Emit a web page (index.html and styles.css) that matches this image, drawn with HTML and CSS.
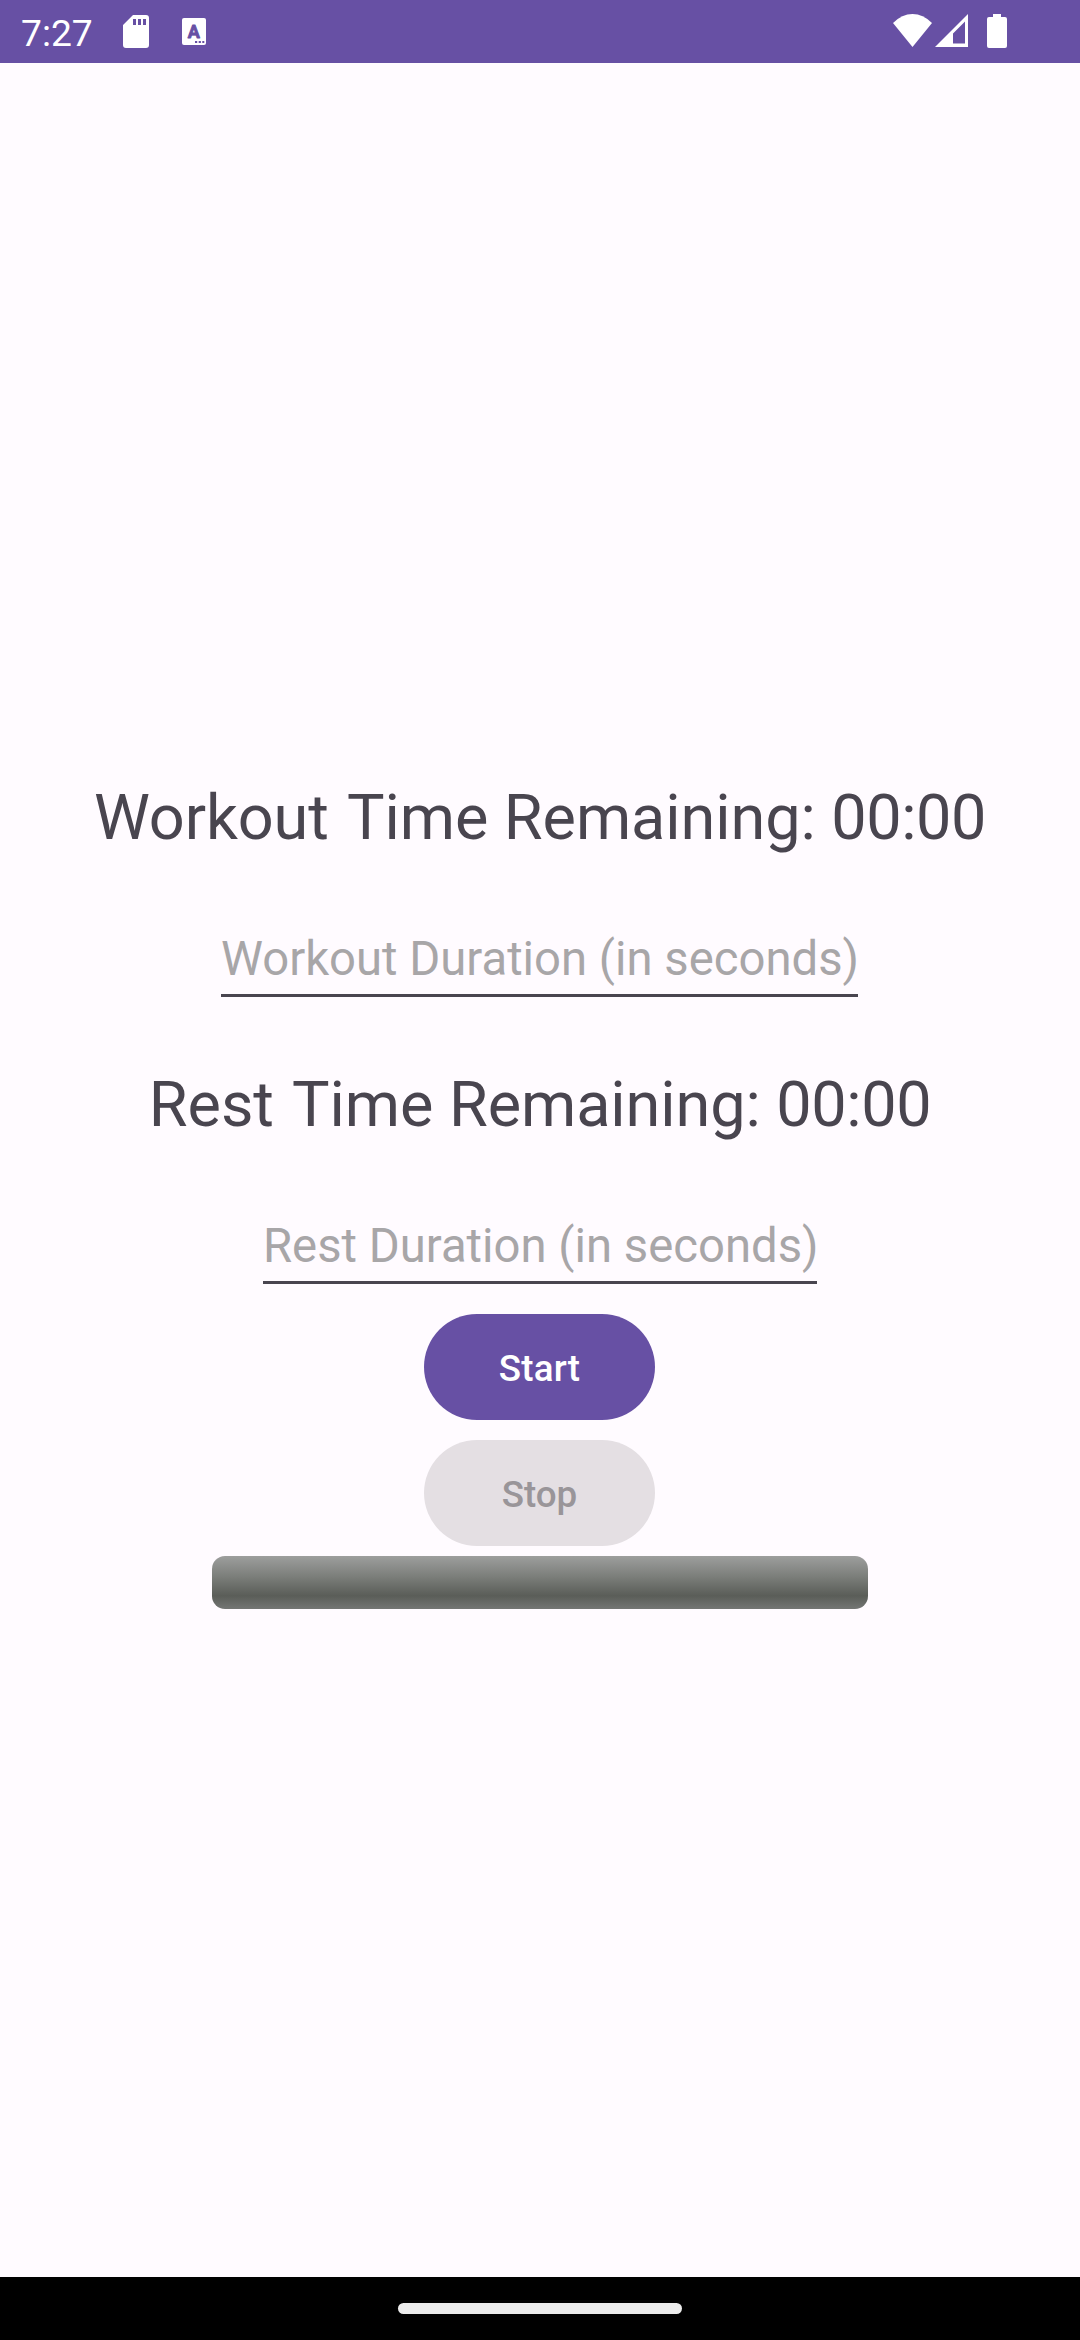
FILE: index.html
```html
<!DOCTYPE html>
<html lang="en">
<head>
<meta charset="utf-8">
<title>Workout Timer</title>
<link rel="stylesheet" href="styles.css">
</head>
<body>
<div class="screen">
  <header class="status-bar">
    <span class="clock">7:27</span>
    <svg class="icon-sd" width="26" height="33" viewBox="0 0 26 33"><path fill="#fff" fill-rule="evenodd" d="M10 0H23Q26 0 26 3V30Q26 33 23 33H3Q0 33 0 30V10ZM10 4V10H13V4ZM15 4V10H18V4ZM20 4V10H23V4Z"/></svg>
    <svg class="icon-app" width="24" height="27" viewBox="0 0 24 27"><rect width="24" height="27" rx="2" fill="#fff"/><text class="app-letter" x="11.8" y="19.500" text-anchor="middle">A</text><path d="M13 23h2.200v2H13zM16.700 23h2.200v2h-2.200zM20.300 23h2v2h-2z" fill="#6750a4"/></svg>
    <span class="spacer"></span>
    <svg class="icon-wifi" width="39" height="33" viewBox="0 0 39 33"><path fill="#fff" d="M0 9Q9 0 19.500 0T39 9L19.500 33Z"/></svg>
    <svg class="icon-signal" width="33" height="33" viewBox="0 0 33 33"><path fill="#fff" fill-rule="evenodd" d="M33 0V33H0ZM30 7.500L18 19.500V29.500H30Z"/></svg>
    <svg class="icon-battery" width="20" height="34" viewBox="0 0 20 34"><path fill="#fff" d="M6 0H14V3H18Q20 3 20 5V32Q20 34 18 34H2Q0 34 0 32V5Q0 3 2 3H6Z"/></svg>
  </header>
  <main class="content">
    <h1 class="title">Workout <span class="label">Time Remaining:</span> <span class="count">00:00</span></h1>
    <div class="field field-workout">Workout Duration (in seconds)</div>
    <h1 class="title title-rest">Rest <span class="label">Time Remaining:</span> <span class="count">00:00</span></h1>
    <div class="field field-rest">Rest Duration (in seconds)</div>
    <button class="button button-start">Start</button>
    <button class="button button-stop" disabled>Stop</button>
    <div class="progress"></div>
  </main>
  <footer class="nav-bar"><span class="nav-handle"></span></footer>
</div>
</body>
</html>
```
FILE: styles.css
```css
* { box-sizing: border-box; }

body {
  margin: 0;
  font-family: Roboto, sans-serif;
}

.screen {
  display: flex;
  flex-direction: column;
  width: 1080px;
  height: 2340px;
  overflow: hidden;
  background: #fffbff;
}

svg { display: block; flex: none; }

.status-bar {
  display: flex;
  height: 63px;
  padding: 0 73px 0 21px;
  background: #6750a4;
  color: #fff;
}

.clock {
  width: 102px;
  padding-top: 11px;
  font-size: 37.2px;
  line-height: 44px;
  white-space: nowrap;
}

.icon-sd { margin-top: 15px; }
.icon-app { margin: 18px 0 0 33px; }
.spacer { flex: 1; }
.icon-wifi { margin: 14px 3px 0 0; }
.icon-signal { margin: 14px 19px 0 0; }
.icon-battery { margin-top: 14px; }

.app-letter {
  fill: #6750a4;
  stroke: #6750a4;
  stroke-width: 0.8px;
  stroke-linejoin: round;
  font: 700 18px Roboto, sans-serif;
}

.content {
  display: flex;
  flex: 1;
  flex-direction: column;
  align-items: center;
  padding-top: 718px;
}

.title {
  margin: 0;
  color: #49454f;
  font-size: 63px;
  font-weight: 400;
  letter-spacing: -0.08px;
  line-height: 74px;
  white-space: nowrap;
}

.title-rest { margin-top: 71px; }
.label { margin-left: 2.7px; }
.count { letter-spacing: -0.4px; }

.field {
  height: 65px;
  margin-top: 77px;
  border-bottom: 3px solid #49454f;
  color: #a8a6a8;
  font-size: 47.25px;
  line-height: 55px;
  white-space: nowrap;
}

.field-workout { width: 637px; margin-right: 1px; }
.field-rest { width: 554px; }

.button {
  width: 231px;
  height: 106px;
  margin-right: 1px;
  padding: 2px 0 0;
  border: 0;
  border-radius: 53px;
  font: 500 36.75px/43px Roboto, sans-serif;
}

.button-start {
  margin-top: 30px;
  background: #6750a4;
  color: #fff;
  letter-spacing: 0.2px;
}

.button-stop {
  margin-top: 20px;
  background: #e4dfe3;
  color: #999599;
}

.progress {
  width: 656px;
  height: 53px;
  margin-top: 10px;
  border-radius: 13px;
  background: linear-gradient(#9d9e9d 0%, #7c7f7b 38%, #5a5d58 75%, #747674 100%);
}

.nav-bar {
  display: flex;
  justify-content: center;
  height: 63px;
  padding-top: 26px;
  background: #000;
}

.nav-handle {
  width: 284px;
  height: 11px;
  border-radius: 6px;
  background: #ececec;
}
```
